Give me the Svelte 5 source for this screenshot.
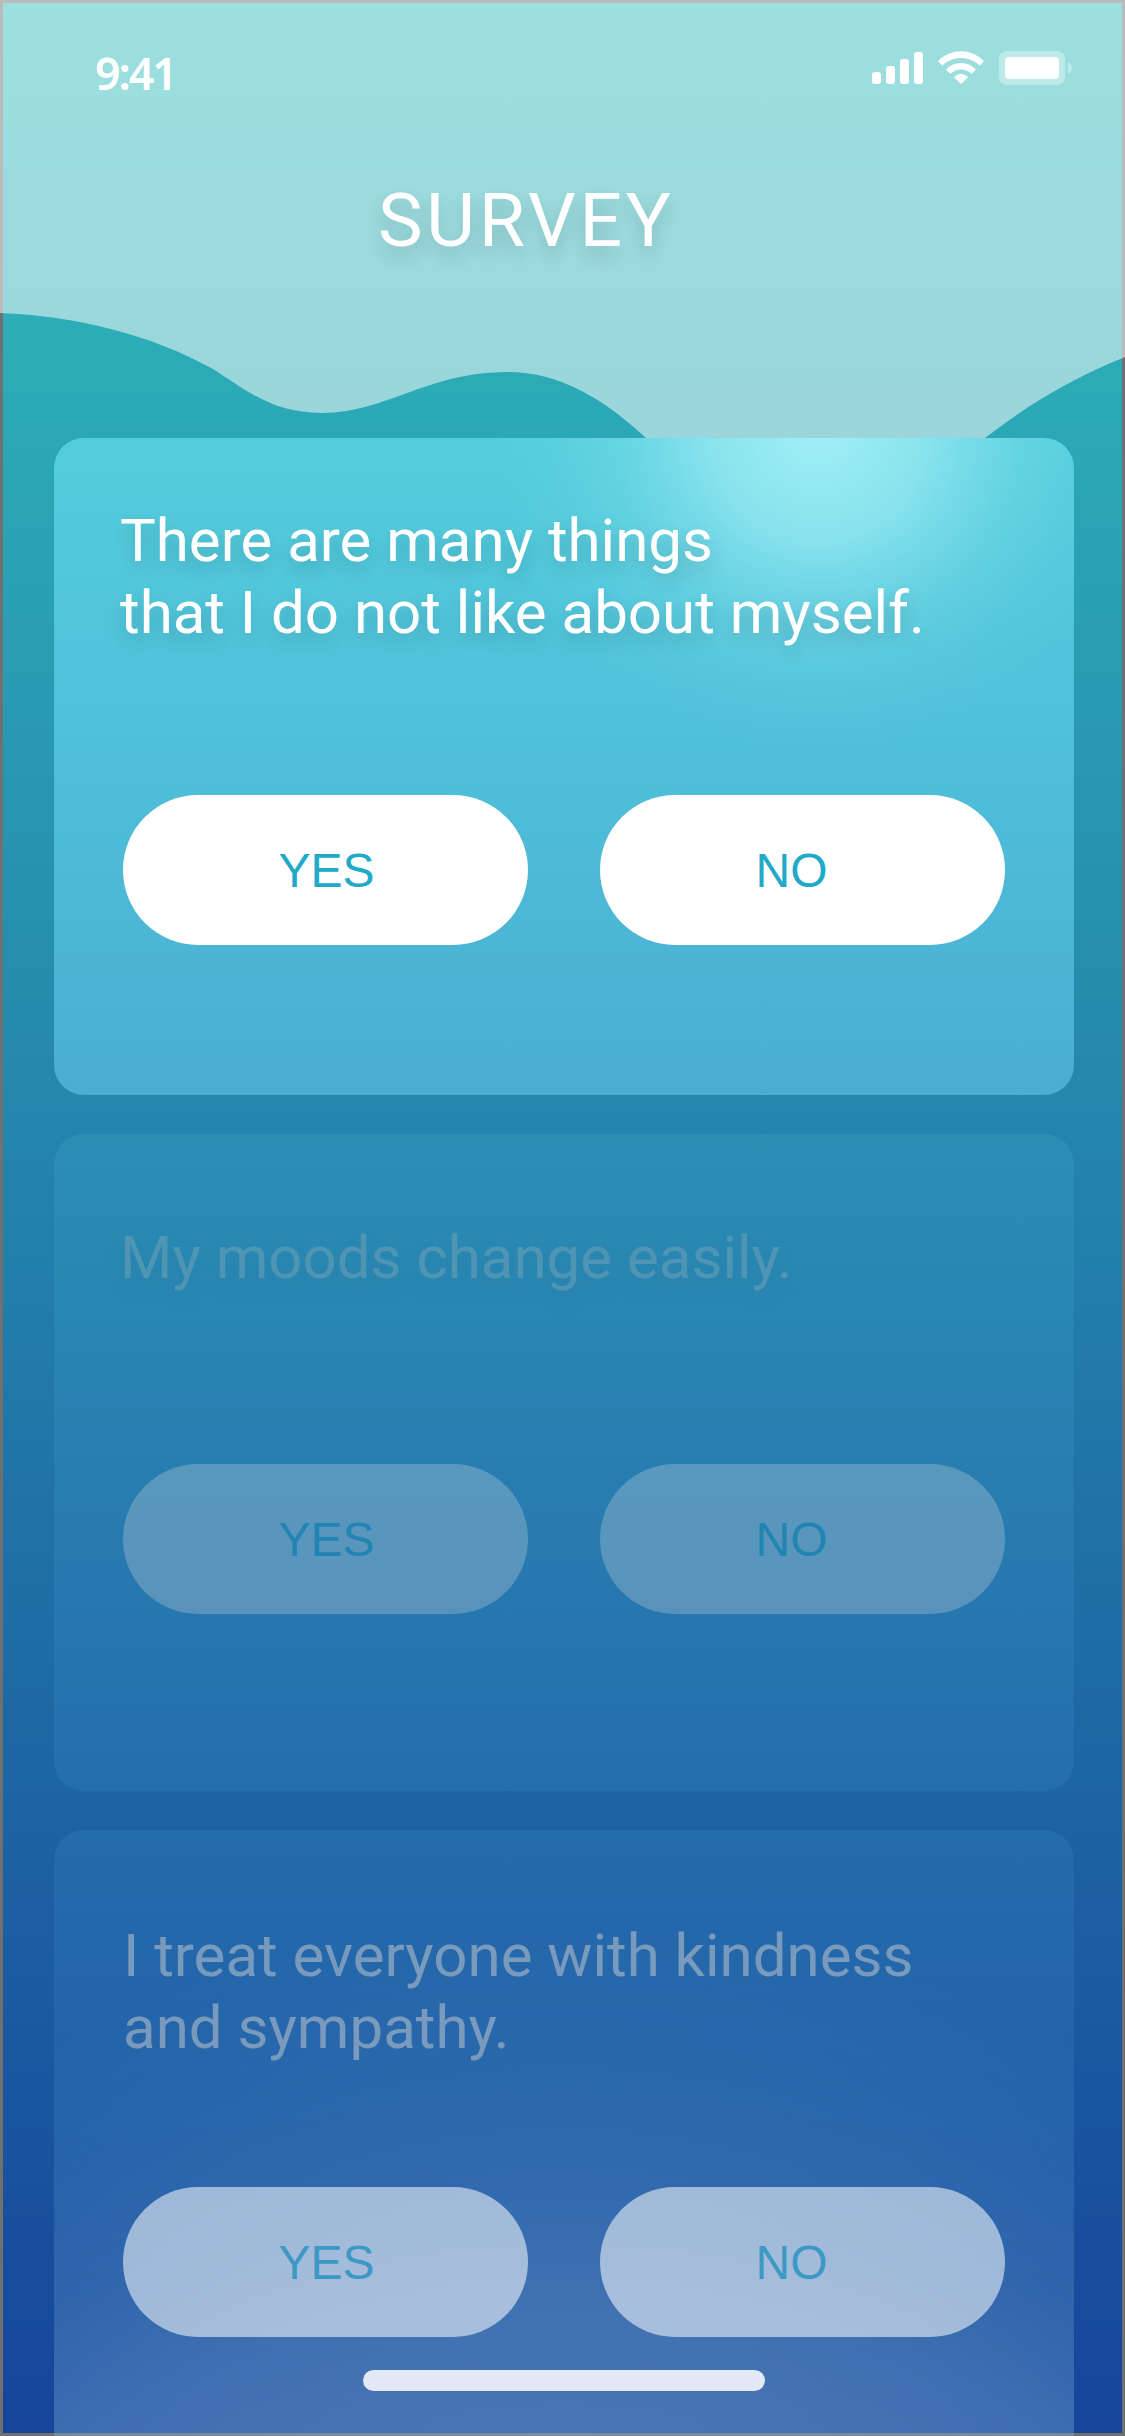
<script>
  const cards = [
    { id: 'active', lines: ['There are many things', 'that I do not like about myself.'] },
    { id: 'next', lines: ['My moods change easily.'] },
    { id: 'last', lines: ['I treat everyone with kindness', 'and sympathy.'] }
  ];
  const answers = ['YES', 'NO'];
</script>

<main class="screen">
  <svg class="wave" viewBox="0 0 1125 438" aria-hidden="true">
    <path d="M0 0H1125V357C1075 377 1030 403 985 438H646C600 395 555 371 504 372C426 373 385 413 322 413C274 413 250 393 213 369C150 334 75 316 0 313Z" />
  </svg>

  <header class="status">
    <span class="time">9:41</span>
    <svg class="icons" viewBox="0 0 201 36" aria-hidden="true">
      <rect x="0" y="21" width="9" height="12" rx="3" />
      <rect x="14" y="15" width="9" height="18" rx="3" />
      <rect x="28" y="8" width="9" height="25" rx="3" />
      <rect x="42" y="1" width="9" height="32" rx="3" />
      <path d="M66 10.200C79.500-3 98.500-3 112 10.200L107.700 14.600C97 4.600 81 4.600 70.300 14.600Z" />
      <path d="M74 18.400C82.500 9.800 95.500 9.800 104 18.400L99.700 22.700C93.500 17 84.500 17 78.300 22.700Z" />
      <path d="M82 26.300C86 22 92 22 96 26.300L89 33Z" />
      <rect class="faint" x="127" y="0" width="66" height="34" rx="8" />
      <rect x="133" y="6" width="54" height="22" rx="3.500" />
      <path class="faint" d="M196 11C201 13 201 21 196 23Z" />
    </svg>
  </header>

  <h1>SURVEY</h1>

  <div class="cards">
    {#each cards as card (card.id)}
      <section class="card {card.id}">
        <p>
          {#each card.lines as line}
            <span>{line}</span>
          {/each}
        </p>
        <div class="answers">
          {#each answers as answer}
            <button type="button">{answer}</button>
          {/each}
        </div>
      </section>
    {/each}
  </div>

  <div class="home"></div>
</main>

<style>
  :global(body) {
    margin: 0;
  }
  .screen {
    position: relative;
    box-sizing: border-box;
    width: 1125px;
    height: 2436px;
    overflow: hidden;
    background: linear-gradient(#30bdbb, #16459b);
    box-shadow: inset 0 0 0 3px #707070;
    font-family: Roboto, 'Liberation Sans', sans-serif;
    color: #fff;
    display: flex;
    flex-direction: column;
  }
  .wave {
    position: absolute;
    inset: 0 0 auto;
    width: 1125px;
    height: 438px;
    fill: rgba(255, 255, 255, 0.526);
  }
  .status {
    position: relative;
    flex: none;
    height: 150px;
    box-sizing: border-box;
    padding: 51px 52px 0 95px;
    display: flex;
    justify-content: space-between;
    align-items: flex-start;
  }
  .time {
    margin-top: -8px;
    font: 600 44.5px/60px 'Noto Sans', 'Open Sans', sans-serif;
    letter-spacing: -2px;
  }
  .icons {
    width: 201px;
    height: 36px;
    fill: #fff;
  }
  .faint {
    opacity: 0.35;
  }
  h1 {
    position: relative;
    flex: none;
    margin: 0;
    height: 288px;
    padding-left: 378px;
    padding-top: 26px;
    box-sizing: border-box;
    font-size: 75px;
    line-height: 88px;
    font-weight: 400;
    letter-spacing: 3.75px;
    text-shadow: 0 9px 18px rgba(0, 0, 0, 0.16);
  }
  .cards {
    position: relative;
    flex: none;
    padding: 0 51px 0 54px;
    display: flex;
    flex-direction: column;
    gap: 39px;
  }
  .card {
    flex: none;
    box-sizing: border-box;
    height: 657px;
    padding: 67px 66px 0;
    border-radius: 30px;
    display: flex;
    flex-direction: column;
  }
  .active {
    background:
      radial-gradient(
        circle 325px at 764px -10px,
        rgba(165, 240, 247, 0.97),
        rgba(165, 240, 247, 0.64) 34%,
        rgba(165, 240, 247, 0.4) 48%,
        rgba(165, 240, 247, 0.19) 64%,
        rgba(165, 240, 247, 0.06) 82%,
        rgba(165, 240, 247, 0)
      ),
      linear-gradient(#53cddc, #50c2da 40%, #4aaed3);
  }
  .next {
    background: linear-gradient(rgba(83, 200, 230, 0.14), rgba(80, 155, 225, 0.16));
    padding-top: 88px;
  }
  .last {
    height: 700px;
    padding-top: 90px;
    padding-left: 69px;
    background:
      radial-gradient(
        circle 1300px at 510px 1400px,
        rgba(158, 184, 216, 0.33) 61%,
        rgba(158, 184, 216, 0.25) 72%,
        rgba(158, 184, 216, 0.13) 81%,
        rgba(158, 184, 216, 0.06) 90%,
        rgba(158, 184, 216, 0)
      ),
      linear-gradient(rgba(83, 160, 220, 0.16), rgba(74, 160, 211, 0.16));
  }
  p {
    margin: 0;
    height: 290px;
    font-size: 60px;
    line-height: 72px;
    white-space: nowrap;
    text-shadow: 0 9px 18px rgba(0, 0, 0, 0.16);
  }
  p span {
    display: block;
  }
  .next p {
    height: 242px;
    color: #bdbcb8;
    opacity: 0.25;
  }
  .last p {
    height: 267px;
    color: #cccdd0;
    opacity: 0.5;
    text-shadow: none;
  }
  .answers {
    display: flex;
    gap: 72px;
    padding-left: 3px;
  }
  .last .answers {
    padding-left: 0;
  }
  button {
    flex: none;
    box-sizing: border-box;
    width: 405px;
    height: 150px;
    border: 0;
    padding: 2px 0 0 155.5px;
    border-radius: 75px;
    background: #fff;
    color: #21a9c8;
    font: 48px/148px 'Liberation Sans', sans-serif;
    text-align: left;
  }
  .next button {
    background: rgba(219, 222, 223, 0.28);
    color: #2284b2;
  }
  .last button {
    background: rgba(255, 255, 255, 0.54);
    color: #3c98c5;
  }
  .home {
    position: absolute;
    left: 363px;
    top: 2370px;
    width: 402px;
    height: 21px;
    border-radius: 10.5px;
    background: #e2e8f5;
  }
</style>
